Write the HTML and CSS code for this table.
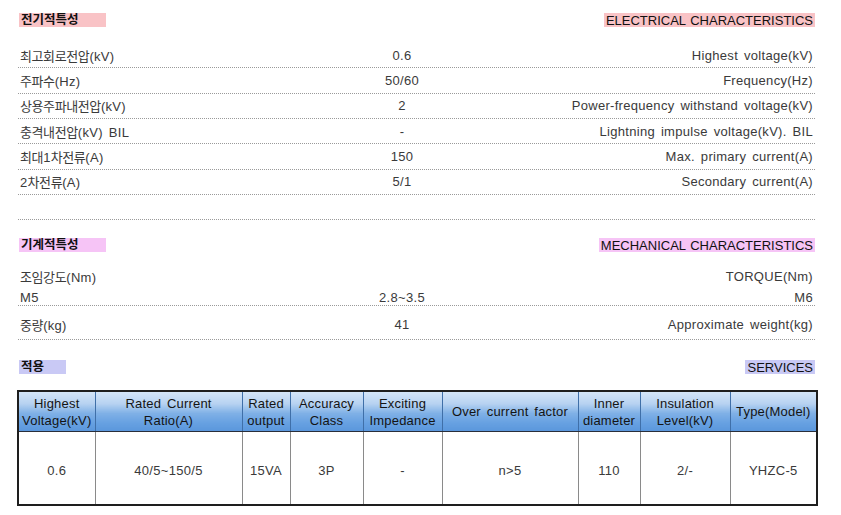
FILE: index.html
```html
<!DOCTYPE html>
<html lang="ko">
<head>
<meta charset="utf-8">
<title>전기적특성</title>
<link rel="stylesheet" href="styles.css">
</head>
<body>
<div class="page">
  <section class="sec sec-elec">
    <div class="sec-head">
      <span class="tag tag-ko tag-red">전기적특성</span>
      <span class="tag tag-red">ELECTRICAL CHARACTERISTICS</span>
    </div>
    <div class="row"><span class="l"><span class="ko">최고회로전압</span>(kV)</span><span class="m">0.6</span><span class="r">Highest voltage(kV)</span></div>
    <div class="row"><span class="l"><span class="ko">주파수</span>(Hz)</span><span class="m">50/60</span><span class="r">Frequency(Hz)</span></div>
    <div class="row"><span class="l"><span class="ko">상용주파내전압</span>(kV)</span><span class="m">2</span><span class="r">Power-frequency withstand voltage(kV)</span></div>
    <div class="row"><span class="l"><span class="ko">충격내전압</span>(kV) BIL</span><span class="m">-</span><span class="r">Lightning impulse voltage(kV). BIL</span></div>
    <div class="row"><span class="l"><span class="ko">최대</span>1<span class="ko">차전류</span>(A)</span><span class="m">150</span><span class="r">Max. primary current(A)</span></div>
    <div class="row"><span class="l">2<span class="ko">차전류</span>(A)</span><span class="m">5/1</span><span class="r">Secondary current(A)</span></div>
    <div class="row"></div>
  </section>

  <section class="sec sec-mech">
    <div class="sec-head">
      <span class="tag tag-ko tag-pink">기계적특성</span>
      <span class="tag tag-pink">MECHANICAL CHARACTERISTICS</span>
    </div>
    <div class="row row-plain"><span class="l"><span class="ko">조임강도</span>(Nm)</span><span class="m"></span><span class="r">TORQUE(Nm)</span></div>
    <div class="row row-tight"><span class="l">M5</span><span class="m">2.8~3.5</span><span class="r">M6</span></div>
    <div class="row row-tall"><span class="l"><span class="ko">중량</span>(kg)</span><span class="m">41</span><span class="r">Approximate weight(kg)</span></div>
  </section>

  <section class="sec sec-serv">
    <div class="sec-head">
      <span class="tag tag-ko tag-short tag-blue">적용</span>
      <span class="tag tag-blue">SERVICES</span>
    </div>
    <table class="spec">
      <colgroup>
        <col class="c1"><col class="c2"><col class="c3"><col class="c4"><col class="c5"><col class="c6"><col class="c7"><col class="c8"><col class="c9">
      </colgroup>
      <thead>
        <tr>
          <th>Highest<br>Voltage(kV)</th>
          <th>Rated Current<br>Ratio(A)</th>
          <th>Rated<br>output</th>
          <th>Accuracy<br>Class</th>
          <th>Exciting<br>Impedance</th>
          <th>Over current factor</th>
          <th>Inner<br>diameter</th>
          <th>Insulation<br>Level(kV)</th>
          <th>Type(Model)</th>
        </tr>
      </thead>
      <tbody>
        <tr>
          <td>0.6</td>
          <td>40/5~150/5</td>
          <td>15VA</td>
          <td>3P</td>
          <td>-</td>
          <td>n&gt;5</td>
          <td>110</td>
          <td>2/-</td>
          <td>YHZC-5</td>
        </tr>
      </tbody>
    </table>
  </section>
</div>
</body>
</html>
```

FILE: styles.css
```css
* { box-sizing: border-box; }

body {
  margin: 0;
  background: #ffffff;
  font-family: "Liberation Sans", "Noto Sans CJK KR", sans-serif;
  font-size: 13px;
  color: #3a3a3a;
  letter-spacing: 0.3px;
  word-spacing: 2px;
}

.page {
  width: 797px;
  margin-left: 18px;
  padding-top: 13px;
}

.ko {
  font-size: 13px;
  letter-spacing: -0.4px;
}

.sec-head {
  display: flex;
  justify-content: space-between;
  align-items: flex-start;
  height: 14px;
}

.tag {
  display: inline-block;
  height: 14px;
  line-height: 15px;
  padding: 0 2px 0 2px;
  color: #111111;
  letter-spacing: 0;
  word-spacing: 1px;
}

.tag-ko {
  width: 87px;
  margin-left: 1px;
  font-weight: bold;
  font-size: 12.5px;
}

.tag-short { width: 47px; }

.tag-red  { background: #f9c3c6; }
.tag-pink { background: #f6c4f6; }
.tag-blue { background: #c9c9f5; }

.row {
  display: grid;
  grid-template-columns: 334px 100px 1fr;
  align-items: center;
  height: 25.33px;
  border-bottom: 1px dotted #9a9a9a;
  white-space: nowrap;
}

.row .m { text-align: center; }
.row .r { text-align: right; padding-right: 2px; }
.row .l { padding-left: 2px; }

.sec-elec .sec-head { margin-bottom: 16px; }

.sec-mech { margin-top: 18px; }
.sec-mech .sec-head { margin-bottom: 12px; }

.row-plain {
  height: 24px;
  border-bottom: none;
}

.row-tight {
  height: 18px;
  align-items: end;
  padding-bottom: 0;
}

.row-tall {
  height: 34px;
  padding-top: 3px;
}

.sec-serv { margin-top: 20px; }
.sec-serv .sec-head { margin-bottom: 16px; }

.spec {
  margin-left: -1px;
  width: 799px;
  table-layout: fixed;
  border-collapse: collapse;
  border: 2px solid #1e1e1e;
}

.c1 { width: 77px; }
.c2 { width: 147px; }
.c3 { width: 48px; }
.c4 { width: 73px; }
.c5 { width: 79px; }
.c6 { width: 136px; }
.c7 { width: 62px; }
.c8 { width: 90px; }
.c9 { width: 87px; }

.spec th {
  height: 40px;
  padding: 0;
  font-weight: normal;
  color: #141414;
  line-height: 17px;
  letter-spacing: 0.2px;
  word-spacing: 2px;
  background: linear-gradient(to bottom, #d4e5f8 0%, #b7d2f1 30%, #7fb0e6 55%, #66a0e1 80%, #5b97dc 100%);
  border-left: 1px solid #3f6fa8;
  border-right: 1px solid #3f6fa8;
  border-bottom: 1px solid #2a2f3a;
  white-space: nowrap;
}

.spec td {
  height: 74px;
  padding: 4px 0 0 0;
  text-align: center;
  color: #3a3a3a;
  border-left: 1px solid #8a8a8a;
  border-right: 1px solid #8a8a8a;
  white-space: nowrap;
}
```
